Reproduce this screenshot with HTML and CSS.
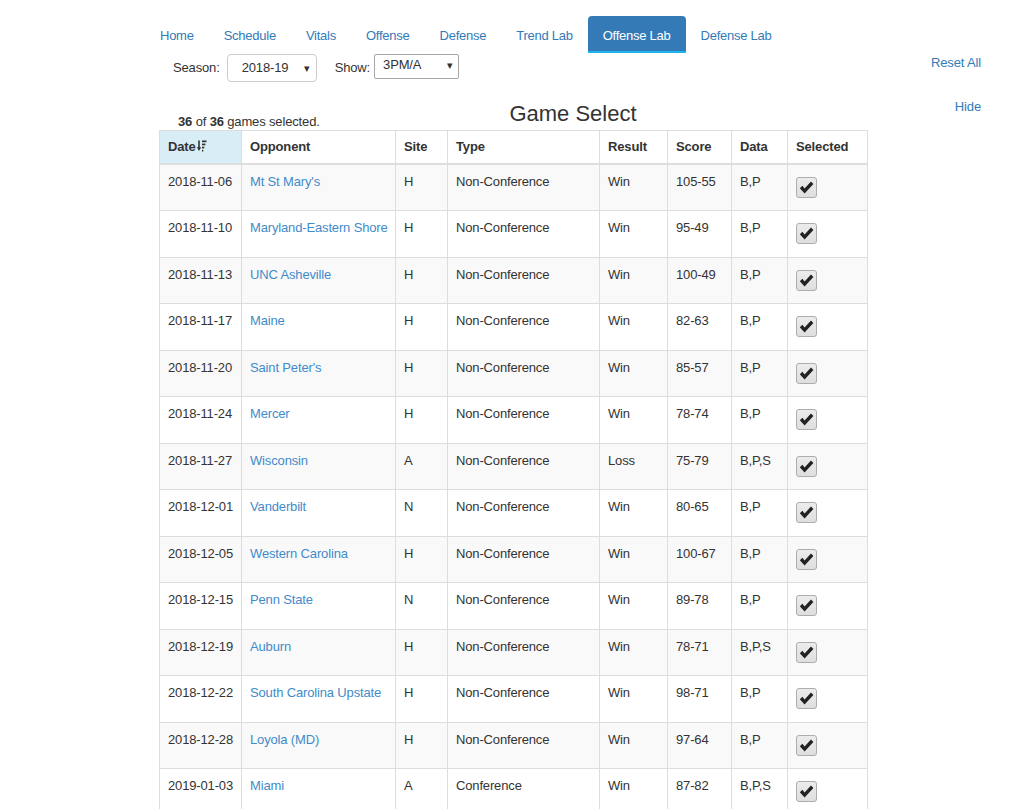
FILE: index.html
```html
<!DOCTYPE html>
<html>
<head>
<meta charset="utf-8">
<link rel="stylesheet" href="styles.css">
</head>
<body>
<ul class="nav">
  <li><a href="#">Home</a></li>
  <li><a href="#">Schedule</a></li>
  <li><a href="#">Vitals</a></li>
  <li><a href="#">Offense</a></li>
  <li><a href="#">Defense</a></li>
  <li><a href="#">Trend Lab</a></li>
  <li class="active"><a href="#">Offense Lab</a></li>
  <li><a href="#">Defense Lab</a></li>
</ul>
<div class="main">
  <div class="toolbar">
    <span class="lbl">Season:</span>
    <div class="sel sel-season"><span>2018-19</span><span class="arrow">▾</span></div>
    <span class="lbl lbl-show">Show:</span>
    <div class="sel sel-show"><span>3PM/A</span><span class="arrow">▾</span></div>
    <a class="reset" href="#">Reset All</a>
  </div>
  <div class="head">
    <div class="status"><b>36</b> of <b>36</b> games selected.</div>
    <h3 class="title">Game Select</h3>
    <a class="hide" href="#">Hide</a>
  </div>
  <table class="games">
    <colgroup>
      <col class="c-date"><col class="c-opp"><col class="c-site"><col class="c-type"><col class="c-res"><col class="c-score"><col class="c-data"><col class="c-sel">
    </colgroup>
    <thead>
      <tr>
        <th class="sorted">Date<svg class="sort" width="10" height="12" viewBox="0 0 10 12"><path d="M2 0.5 V9" stroke="#333" stroke-width="1.6"/><path d="M-0.2 7.2 L2 11 L4.2 7.2 Z" fill="#333"/><rect x="5" y="0.5" width="4.5" height="1.7" fill="#333"/><rect x="5" y="3.6" width="3.4" height="1.7" fill="#333"/><rect x="5" y="6.7" width="2.3" height="1.7" fill="#333"/><rect x="5" y="9.8" width="1.3" height="1.7" fill="#333"/></svg></th>
        <th>Opponent</th><th>Site</th><th>Type</th><th>Result</th><th>Score</th><th>Data</th><th>Selected</th>
      </tr>
    </thead>
    <tbody>
      <tr><td>2018-11-06</td><td><a href="#">Mt St Mary's</a></td><td>H</td><td>Non-Conference</td><td>Win</td><td>105-55</td><td>B,P</td><td><span class="chk"><svg width="15" height="13" viewBox="0 0 15 13"><path d="M0.8 7.2 L3.4 4.8 L5.6 7.4 L12 0.6 L14.4 3 L5.6 12.4 Z" fill="#222"/></svg></span></td></tr>
      <tr><td>2018-11-10</td><td><a href="#">Maryland-Eastern Shore</a></td><td>H</td><td>Non-Conference</td><td>Win</td><td>95-49</td><td>B,P</td><td><span class="chk"><svg width="15" height="13" viewBox="0 0 15 13"><path d="M0.8 7.2 L3.4 4.8 L5.6 7.4 L12 0.6 L14.4 3 L5.6 12.4 Z" fill="#222"/></svg></span></td></tr>
      <tr><td>2018-11-13</td><td><a href="#">UNC Asheville</a></td><td>H</td><td>Non-Conference</td><td>Win</td><td>100-49</td><td>B,P</td><td><span class="chk"><svg width="15" height="13" viewBox="0 0 15 13"><path d="M0.8 7.2 L3.4 4.8 L5.6 7.4 L12 0.6 L14.4 3 L5.6 12.4 Z" fill="#222"/></svg></span></td></tr>
      <tr><td>2018-11-17</td><td><a href="#">Maine</a></td><td>H</td><td>Non-Conference</td><td>Win</td><td>82-63</td><td>B,P</td><td><span class="chk"><svg width="15" height="13" viewBox="0 0 15 13"><path d="M0.8 7.2 L3.4 4.8 L5.6 7.4 L12 0.6 L14.4 3 L5.6 12.4 Z" fill="#222"/></svg></span></td></tr>
      <tr><td>2018-11-20</td><td><a href="#">Saint Peter's</a></td><td>H</td><td>Non-Conference</td><td>Win</td><td>85-57</td><td>B,P</td><td><span class="chk"><svg width="15" height="13" viewBox="0 0 15 13"><path d="M0.8 7.2 L3.4 4.8 L5.6 7.4 L12 0.6 L14.4 3 L5.6 12.4 Z" fill="#222"/></svg></span></td></tr>
      <tr><td>2018-11-24</td><td><a href="#">Mercer</a></td><td>H</td><td>Non-Conference</td><td>Win</td><td>78-74</td><td>B,P</td><td><span class="chk"><svg width="15" height="13" viewBox="0 0 15 13"><path d="M0.8 7.2 L3.4 4.8 L5.6 7.4 L12 0.6 L14.4 3 L5.6 12.4 Z" fill="#222"/></svg></span></td></tr>
      <tr><td>2018-11-27</td><td><a href="#">Wisconsin</a></td><td>A</td><td>Non-Conference</td><td>Loss</td><td>75-79</td><td>B,P,S</td><td><span class="chk"><svg width="15" height="13" viewBox="0 0 15 13"><path d="M0.8 7.2 L3.4 4.8 L5.6 7.4 L12 0.6 L14.4 3 L5.6 12.4 Z" fill="#222"/></svg></span></td></tr>
      <tr><td>2018-12-01</td><td><a href="#">Vanderbilt</a></td><td>N</td><td>Non-Conference</td><td>Win</td><td>80-65</td><td>B,P</td><td><span class="chk"><svg width="15" height="13" viewBox="0 0 15 13"><path d="M0.8 7.2 L3.4 4.8 L5.6 7.4 L12 0.6 L14.4 3 L5.6 12.4 Z" fill="#222"/></svg></span></td></tr>
      <tr><td>2018-12-05</td><td><a href="#">Western Carolina</a></td><td>H</td><td>Non-Conference</td><td>Win</td><td>100-67</td><td>B,P</td><td><span class="chk"><svg width="15" height="13" viewBox="0 0 15 13"><path d="M0.8 7.2 L3.4 4.8 L5.6 7.4 L12 0.6 L14.4 3 L5.6 12.4 Z" fill="#222"/></svg></span></td></tr>
      <tr><td>2018-12-15</td><td><a href="#">Penn State</a></td><td>N</td><td>Non-Conference</td><td>Win</td><td>89-78</td><td>B,P</td><td><span class="chk"><svg width="15" height="13" viewBox="0 0 15 13"><path d="M0.8 7.2 L3.4 4.8 L5.6 7.4 L12 0.6 L14.4 3 L5.6 12.4 Z" fill="#222"/></svg></span></td></tr>
      <tr><td>2018-12-19</td><td><a href="#">Auburn</a></td><td>H</td><td>Non-Conference</td><td>Win</td><td>78-71</td><td>B,P,S</td><td><span class="chk"><svg width="15" height="13" viewBox="0 0 15 13"><path d="M0.8 7.2 L3.4 4.8 L5.6 7.4 L12 0.6 L14.4 3 L5.6 12.4 Z" fill="#222"/></svg></span></td></tr>
      <tr><td>2018-12-22</td><td><a href="#">South Carolina Upstate</a></td><td>H</td><td>Non-Conference</td><td>Win</td><td>98-71</td><td>B,P</td><td><span class="chk"><svg width="15" height="13" viewBox="0 0 15 13"><path d="M0.8 7.2 L3.4 4.8 L5.6 7.4 L12 0.6 L14.4 3 L5.6 12.4 Z" fill="#222"/></svg></span></td></tr>
      <tr><td>2018-12-28</td><td><a href="#">Loyola (MD)</a></td><td>H</td><td>Non-Conference</td><td>Win</td><td>97-64</td><td>B,P</td><td><span class="chk"><svg width="15" height="13" viewBox="0 0 15 13"><path d="M0.8 7.2 L3.4 4.8 L5.6 7.4 L12 0.6 L14.4 3 L5.6 12.4 Z" fill="#222"/></svg></span></td></tr>
      <tr><td>2019-01-03</td><td><a href="#">Miami</a></td><td>A</td><td>Conference</td><td>Win</td><td>87-82</td><td>B,P,S</td><td><span class="chk"><svg width="15" height="13" viewBox="0 0 15 13"><path d="M0.8 7.2 L3.4 4.8 L5.6 7.4 L12 0.6 L14.4 3 L5.6 12.4 Z" fill="#222"/></svg></span></td></tr>
    </tbody>
  </table>
</div>
</body>
</html>
```
FILE: styles.css
```css
html, body {
  margin: 0;
  padding: 0;
  background: #fff;
}
body {
  font-family: "Liberation Sans", Arial, sans-serif;
  font-size: 13px;
  line-height: 1.42857;
  letter-spacing: -0.15px;
  color: #333;
}
a {
  color: #337ab7;
  text-decoration: none;
}

/* nav pills */
.nav {
  list-style: none;
  margin: 0;
  padding: 16px 0 0 145px;
  display: flex;
}
.nav li a {
  display: block;
  padding: 11px 15px 6px;
  line-height: 18px;
  letter-spacing: -0.25px;
  border-bottom: 2px solid transparent;
  border-radius: 4px 4px 0 0;
  color: #337ab7;
}
.nav li.active a {
  background: #337ab7;
  color: #fff;
  border-bottom-color: #1cb3ee;
}

.main {
  margin-left: 159px;
  width: 828px;
}

/* toolbar */
.toolbar {
  display: flex;
  align-items: center;
  padding: 1px 6px 0 14px;
  height: 28px;
}
.lbl {
  margin-right: 7px;
}
.lbl-show {
  margin-left: 18px;
  margin-right: 4px;
}
.sel {
  box-sizing: border-box;
  display: flex;
  align-items: center;
  justify-content: space-between;
  background: #fff;
  color: #333;
}
.sel-season {
  width: 90px;
  height: 28px;
  border: 1px solid #ccc;
  border-radius: 4px;
  padding: 1px 6px 0 14px;
}
.sel-show {
  width: 85px;
  height: 25px;
  border: 1px solid #a6a6a6;
  border-radius: 2px;
  padding: 0 5px 2px 8px;
  margin-top: -3px;
}
.arrow {
  font-size: 11px;
  color: #333;
}
.reset {
  margin-left: auto;
  align-self: flex-start;
  margin-top: 0;
}

/* heading row */
.head {
  display: grid;
  grid-template-columns: 1fr auto 1fr;
  padding: 16px 0 0 0;
  height: 32px;
}
.status {
  align-self: end;
  padding-left: 19px;
  line-height: 18px;
  margin-bottom: -1px;
}
.title {
  margin: 3px 0 0;
  font-size: 22px;
  font-weight: normal;
  line-height: 26px;
  letter-spacing: 0;
  align-self: start;
}
.hide {
  justify-self: end;
  align-self: start;
  margin-right: 6px;
}

/* table */
.games {
  border-collapse: collapse;
  table-layout: fixed;
  width: 708px;
  border: 1px solid #ddd;
}
.c-date { width: 82px; }
.c-opp { width: 154px; }
.c-site { width: 52px; }
.c-type { width: 152px; }
.c-res { width: 68px; }
.c-score { width: 64px; }
.c-data { width: 56px; }
.c-sel { width: 80px; }

.games th, .games td {
  border: 1px solid #ddd;
  text-align: left;
  vertical-align: top;
  padding: 8px 8px;
  white-space: nowrap;
}
.games th {
  font-weight: bold;
  padding: 7px 8px 6px;
  border-bottom: 2px solid #ddd;
}
.games th.sorted {
  background: #d9edf7;
}
.sort {
  vertical-align: -1px;
  margin-left: 1px;
}
.games tbody tr:nth-of-type(odd) {
  background: #f9f9f9;
}
.games td a {
  color: #428bca;
}
.chk {
  box-sizing: border-box;
  display: flex;
  align-items: center;
  justify-content: center;
  width: 21px;
  height: 21px;
  margin: 4px 0 4.5px;
  border: 1px solid #adadad;
  border-radius: 3px;
  background: linear-gradient(#ececec, #dedede);
}
```
